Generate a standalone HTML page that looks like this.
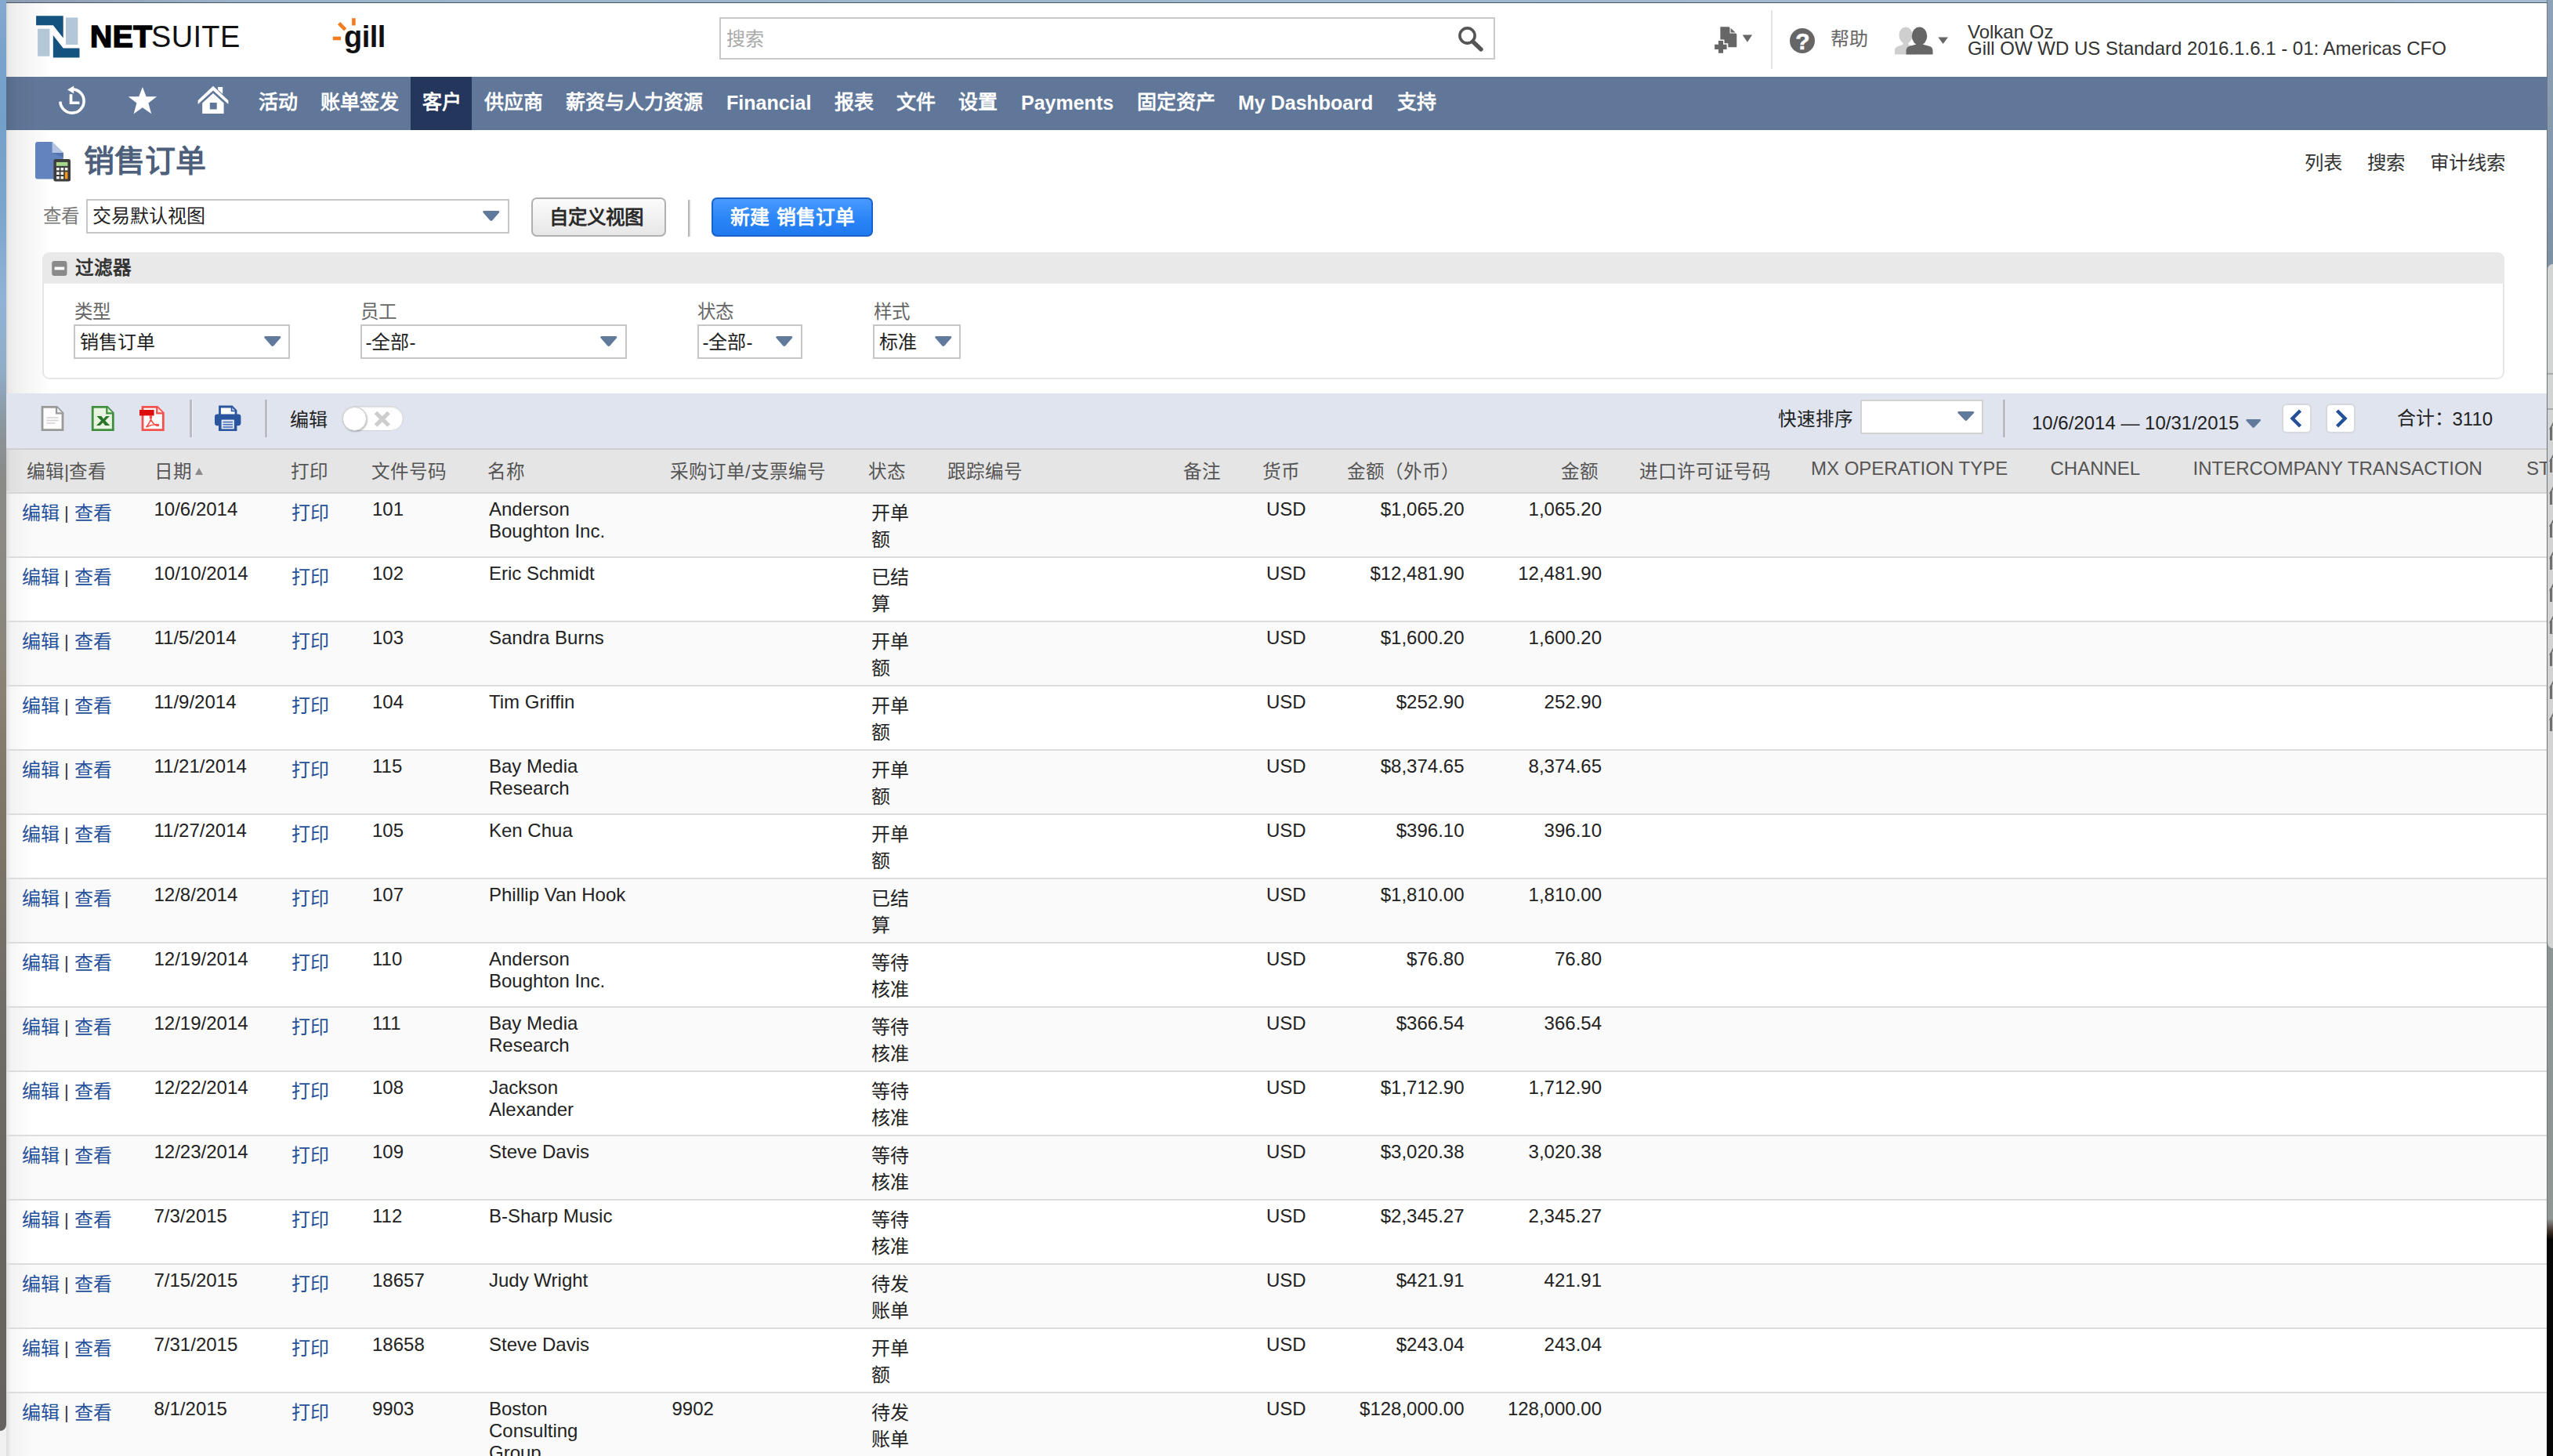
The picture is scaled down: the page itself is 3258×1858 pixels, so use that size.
<!DOCTYPE html>
<html lang="zh-CN"><head><meta charset="utf-8"><title>销售订单 - NetSuite</title>
<style>
html,body{margin:0;padding:0}
body{width:3258px;height:1858px;overflow:hidden;position:relative;background:#fff;font-family:"Liberation Sans",sans-serif;}
.t{position:absolute;white-space:nowrap;font-family:"Liberation Sans",sans-serif;}
.a{position:absolute}
.sel{position:absolute;box-sizing:border-box;background:#fff;border:2px solid #c6c6c6}
.car{position:absolute;width:0;height:0;border-left:11px solid transparent;border-right:11px solid transparent;border-top:12px solid #5f7799;border-radius:3px}
svg{position:absolute;overflow:visible}
</style></head><body>

<div class="a" style="left:0;top:0;width:8px;height:1858px;background:#f1f1f1"></div>
<div class="a" style="left:0;top:0;width:8px;height:1826px;border-radius:0 0 8px 0;background:linear-gradient(#84a9d0 0px,#7aa3cc 60px,#73a0c9 150px,#7ba5cc 270px,#8fb3d6 380px,#90adc8 470px,#8c979f 540px,#8a8b8a 600px,#8a8578 850px,#807868 1000px,#6f6c66 1300px,#68645f 1600px,#66625f 1826px)"></div>
<div class="a" style="left:8px;top:0;width:3250px;height:3px;background:linear-gradient(90deg,#8f9db3,#9bb3c8 300px,#9fb8cc 1600px,#a6bad2 3250px)"></div>
<div class="a" style="left:8px;top:3px;width:3242px;height:1px;background:#4a5764"></div>
<div class="a" style="left:8px;top:4px;width:60px;height:94px;background:linear-gradient(90deg,#dad7d5 0,#e9e9e9 3px,#f0f0f0 12px,#f7f7f7 32px,#fff 60px)"></div>
<div class="a" style="left:8px;top:166px;width:60px;height:336px;background:linear-gradient(90deg,#dad7d5 0,#e9e9e9 3px,#f0f0f0 12px,#f7f7f7 32px,#fff 60px)"></div>
<div class="a" style="left:3250px;top:0;width:8px;height:1858px;background:linear-gradient(#8ea3b8 0,#7e91a3 336px,#8a9594 1212px,#8f9794 1555px,#3a2a22 1572px,#060606 1582px,#050505 1858px)"></div>
<div class="a" style="left:3251px;top:337px;width:8px;height:873px;border-radius:7px 0 0 7px;background:#d3d3d3"></div>
<div class="a" style="left:3251px;top:476px;width:8px;height:1.5px;background:#a9a9a9"></div><div class="a" style="left:3251px;top:521px;width:8px;height:1.5px;background:#a9a9a9"></div>
<div class="a" style="left:3254.4px;top:545.0px;width:2.4px;height:17px;background:#6e6e6e"></div><div class="a" style="left:3255.5px;top:537.0px;width:2.4px;height:11px;background:#6e6e6e;transform:skewX(-28deg)"></div>
<div class="a" style="left:3254.4px;top:586.2px;width:2.4px;height:17px;background:#6e6e6e"></div><div class="a" style="left:3255.5px;top:578.2px;width:2.4px;height:11px;background:#6e6e6e;transform:skewX(-28deg)"></div>
<div class="a" style="left:3254.4px;top:627.4px;width:2.4px;height:17px;background:#6e6e6e"></div><div class="a" style="left:3255.5px;top:619.4px;width:2.4px;height:11px;background:#6e6e6e;transform:skewX(-28deg)"></div>
<div class="a" style="left:3254.4px;top:668.6px;width:2.4px;height:17px;background:#6e6e6e"></div><div class="a" style="left:3255.5px;top:660.6px;width:2.4px;height:11px;background:#6e6e6e;transform:skewX(-28deg)"></div>
<div class="a" style="left:3254.4px;top:709.8px;width:2.4px;height:17px;background:#6e6e6e"></div><div class="a" style="left:3255.5px;top:701.8px;width:2.4px;height:11px;background:#6e6e6e;transform:skewX(-28deg)"></div>
<div class="a" style="left:3254.4px;top:751.0px;width:2.4px;height:17px;background:#6e6e6e"></div><div class="a" style="left:3255.5px;top:743.0px;width:2.4px;height:11px;background:#6e6e6e;transform:skewX(-28deg)"></div>
<div class="a" style="left:3254.4px;top:792.2px;width:2.4px;height:17px;background:#6e6e6e"></div><div class="a" style="left:3255.5px;top:784.2px;width:2.4px;height:11px;background:#6e6e6e;transform:skewX(-28deg)"></div>
<div class="a" style="left:3254.4px;top:833.4px;width:2.4px;height:17px;background:#6e6e6e"></div><div class="a" style="left:3255.5px;top:825.4px;width:2.4px;height:11px;background:#6e6e6e;transform:skewX(-28deg)"></div>
<div class="a" style="left:3254.4px;top:874.6px;width:2.4px;height:17px;background:#6e6e6e"></div><div class="a" style="left:3255.5px;top:866.6px;width:2.4px;height:11px;background:#6e6e6e;transform:skewX(-28deg)"></div>
<div class="a" style="left:3254.4px;top:915.8px;width:2.4px;height:17px;background:#6e6e6e"></div><div class="a" style="left:3255.5px;top:907.8px;width:2.4px;height:11px;background:#6e6e6e;transform:skewX(-28deg)"></div>
<div class="a" style="left:3250px;top:0;width:1.3px;height:1575px;background:rgba(85,85,85,.5)"></div>
<svg style="left:0;top:0" width="320" height="98" viewBox="0 0 320 98">
<rect x="48.1" y="36.7" width="15.3" height="35.1" fill="#b3c7d8"/>
<rect x="84" y="22.4" width="15.4" height="34.6" fill="#b3c7d8"/>
<polygon points="46.1,20.2 80.7,20.2 80.7,48.5 67.8,32.3 46.1,32.3" fill="#14527f"/>
<polygon points="67.8,44.9 80.7,61.5 101.5,61.5 101.5,73.4 67.8,73.4" fill="#14527f"/>
</svg>
<div class="t" style="left:115px;top:27.3px;font-size:39px;line-height:39px;color:#000;font-weight:bold;-webkit-text-stroke:1.6px #000;letter-spacing:0.5px">NET</div>
<div class="t" style="left:192.6px;top:27.3px;font-size:39px;line-height:39px;color:#111;font-weight:normal;letter-spacing:0.4px;transform:scaleX(.972);transform-origin:0 0">SUITE</div>
<svg style="left:0;top:0" width="520" height="98" viewBox="0 0 520 98">
<g stroke="#f47b20" stroke-width="4.6" fill="none">
<line x1="424.8" y1="49" x2="435" y2="49"/>
<line x1="432.6" y1="29.6" x2="440.6" y2="37.8"/>
<line x1="451.4" y1="23.2" x2="451.4" y2="32.4"/>
</g></svg>
<div class="t" style="left:439px;top:27.6px;font-size:38px;line-height:38px;color:#111;font-weight:bold;letter-spacing:-0.5px">gill</div>
<div class="a" style="left:918px;top:22px;width:990px;height:54px;box-sizing:border-box;border:2px solid #c9c9c9;background:#fff"></div>
<div class="t" style="left:927px;top:38.3px;font-size:24px;line-height:24px;color:#a9a9a9;font-weight:normal;">搜索</div>
<svg style="left:1856px;top:30px" width="44" height="40" viewBox="0 0 44 40">
<circle cx="16.5" cy="15.5" r="9.6" fill="none" stroke="#555" stroke-width="3.6"/>
<line x1="23.5" y1="23" x2="34" y2="33" stroke="#555" stroke-width="5.4" stroke-linecap="round"/>
</svg>
<svg style="left:2180px;top:28px" width="70" height="46" viewBox="2180 28 70 46">
<path d="M2195.4 34.2 H2206.5 L2216.3 43.6 V60.2 H2195.4 Z" fill="#666"/>
<path d="M2207.5 33.2 L2217.3 42.6 H2207.5 Z" fill="#fff"/>
<path d="M2208.6 35.8 L2214.6 41.6 H2208.6 Z" fill="#666"/>
<path d="M2191.5 50.5 h9 v4.8 h4.8 v9.2 h-4.8 v4.8 h-9 v-4.8 h-4.8 v-9.2 h4.8 z" fill="#fff"/>
<path d="M2193 52 h6.1 v4.8 h4.5 v6.2 h-4.5 v4.8 h-6.1 v-4.8 h-4.9 v-6.2 h4.9 z" fill="#666"/>
<path d="M2223.7 44.5 h12.4 l-6.2 9.2 z" fill="#666"/>
</svg>
<div class="a" style="left:2259.6px;top:13px;width:2.2px;height:75px;background:#e4e4e4"></div>
<div class="a" style="left:2284px;top:36px;width:32px;height:32px;border-radius:16px;background:#666"></div>
<div class="t" style="left:2291.2px;top:37.8px;font-size:30px;line-height:30px;color:#fff;font-weight:bold;-webkit-text-stroke:0.6px #fff">?</div>
<div class="t" style="left:2335.8px;top:38.1px;font-size:24px;line-height:24px;color:#666;font-weight:normal;">帮助</div>
<svg style="left:2410px;top:28px" width="90" height="46" viewBox="2410 28 90 46">
<g fill="#cfcfcf"><ellipse cx="2432" cy="45" rx="8.6" ry="10.5"/><path d="M2418 69.6 v-5.5 q0-4 4.5-5.2 l6-1.8 v-4 h7 v4 l6 1.8 q4.5 1.2 4.5 5.2 v5.5 z"/></g>
<g fill="#666"><ellipse cx="2449.5" cy="46" rx="9.8" ry="11.6"/><path d="M2432.5 69.6 v-5 q0-4.6 5-5.8 l7.5-2 v-4.5 h9 v4.5 l7.5 2 q5 1.2 5 5.8 v5 z"/></g>
<path d="M2473.3 47.6 h12.7 l-6.35 8.5 z" fill="#666"/>
</svg>
<div class="t" style="left:2511px;top:28.9px;font-size:24px;line-height:24px;color:#333;font-weight:normal;">Volkan Oz</div>
<div class="t" style="left:2511px;top:50.1px;font-size:24px;line-height:24px;color:#333;font-weight:normal;">Gill OW WD US Standard 2016.1.6.1 - 01: Americas CFO</div>
<div class="a" style="left:8px;top:98px;width:3242px;height:68px;background:#607799"></div>
<div class="a" style="left:8px;top:98px;width:40px;height:68px;background:linear-gradient(90deg,#566a89,#5d7394 14px,#607799 40px)"></div>
<div class="a" style="left:524px;top:98px;width:78px;height:68px;background:#24365c"></div>
<svg style="left:60px;top:98px" width="250" height="68" viewBox="60 98 250 68">
<path d="M 92.6 113.9 A 15.1 15.1 0 1 1 76.9 129.6" fill="none" stroke="#fff" stroke-width="3.6"/>
<path d="M86.1 114.4 L94.2 109.4 V119.4 Z" fill="#fff"/>
<path d="M88.7 120.2 h3.7 v9.4 h9 v3.4 h-12.7 z" fill="#fff"/>
<polygon fill="#fff" points="181.9,111.1 186.6,123.2 200.1,123.2 189.4,131.6 193.2,145.2 181.9,137.2 170.6,145.2 174.4,131.6 163.7,123.2 177.2,123.2"/>
<path d="M252.6 128.2 L272 109.8 L291.4 128.2 L291.4 133 L272 115.4 L252.6 133 Z" fill="#fff"/>
<path d="M278.1 111.1 h6.1 v9 l-6.1 -5.6 z" fill="#fff"/>
<path d="M258.2 131.6 L272 119 L285.6 131.6 V145.1 H258.2 Z M267.8 131 V139.5 H276.7 V131 Z" fill="#fff" fill-rule="evenodd"/>
</svg>
<div class="t" style="left:330px;top:117.8px;font-size:25px;line-height:25px;color:#fff;font-weight:bold;">活动</div>
<div class="t" style="left:409px;top:117.8px;font-size:25px;line-height:25px;color:#fff;font-weight:bold;">账单签发</div>
<div class="t" style="left:538.5px;top:117.8px;font-size:25px;line-height:25px;color:#fff;font-weight:bold;">客户</div>
<div class="t" style="left:618px;top:117.8px;font-size:25px;line-height:25px;color:#fff;font-weight:bold;">供应商</div>
<div class="t" style="left:722px;top:117.8px;font-size:25px;line-height:25px;color:#fff;font-weight:bold;">薪资与人力资源</div>
<div class="t" style="left:927px;top:118.5px;font-size:25px;line-height:25px;color:#fff;font-weight:bold;">Financial</div>
<div class="t" style="left:1065px;top:117.8px;font-size:25px;line-height:25px;color:#fff;font-weight:bold;">报表</div>
<div class="t" style="left:1144px;top:117.8px;font-size:25px;line-height:25px;color:#fff;font-weight:bold;">文件</div>
<div class="t" style="left:1223px;top:117.8px;font-size:25px;line-height:25px;color:#fff;font-weight:bold;">设置</div>
<div class="t" style="left:1303px;top:118.5px;font-size:25px;line-height:25px;color:#fff;font-weight:bold;">Payments</div>
<div class="t" style="left:1451px;top:117.8px;font-size:25px;line-height:25px;color:#fff;font-weight:bold;">固定资产</div>
<div class="t" style="left:1580px;top:118.5px;font-size:25px;line-height:25px;color:#fff;font-weight:bold;">My Dashboard</div>
<div class="t" style="left:1782.5px;top:117.8px;font-size:25px;line-height:25px;color:#fff;font-weight:bold;">支持</div>
<svg style="left:40px;top:176px" width="60" height="62" viewBox="40 176 60 62">
<path d="M48 181 H66.6 L80.8 195 V225.6 a3 3 0 0 1 -3 3 H48 a3 3 0 0 1 -3 -3 V184 a3 3 0 0 1 3 -3 Z" fill="#6283bd"/>
<path d="M66.6 181 L80.8 195 H66.6 Z" fill="#b3c3e2"/>
<path d="M66.6 195 H80.8 V201 Z" fill="#5273ab"/>
<rect x="68.4" y="203.1" width="21.6" height="28.5" rx="2.4" fill="#3d3d3d"/>
<rect x="71.8" y="206.9" width="14.6" height="4.9" fill="#a8d88a"/>
<g fill="#fff"><rect x="72.1" y="214" width="3.6" height="3.4"/><rect x="77.5" y="214" width="3.6" height="3.4"/><rect x="82.8" y="214" width="3.6" height="3.4"/>
<rect x="72.1" y="219.4" width="3.6" height="3.6"/><rect x="77.5" y="219.4" width="3.6" height="3.6"/>
<rect x="72.1" y="225" width="3.6" height="3.4"/><rect x="77.5" y="225" width="3.6" height="3.4"/></g>
<rect x="82.8" y="219.4" width="3.6" height="9" fill="#f59a1f"/>
</svg>
<div class="t" style="left:107.3px;top:185.8px;font-size:39px;line-height:39px;color:#4d5f7b;font-weight:bold;">销售订单</div>
<div class="t" style="left:2941px;top:195.5px;font-size:24.4px;line-height:24.4px;color:#333;font-weight:normal;">列表</div>
<div class="t" style="left:3020.5px;top:195.5px;font-size:24.4px;line-height:24.4px;color:#333;font-weight:normal;">搜索</div>
<div class="t" style="left:3101px;top:195.5px;font-size:24.4px;line-height:24.4px;color:#333;font-weight:normal;">审计线索</div>
<div class="t" style="left:54.5px;top:264.7px;font-size:23.5px;line-height:23.5px;color:#777;font-weight:normal;">查看</div>
<div class="sel" style="left:110px;top:254px;width:540px;height:44px"></div>
<div class="t" style="left:118px;top:264.3px;font-size:24px;line-height:24px;color:#222;font-weight:normal;">交易默认视图</div>
<svg style="left:616.1px;top:268.7px" width="21.6" height="13.2" viewBox="0 0 21.6 13.2" preserveAspectRatio="none"><path d="M2 0 H19.6 Q22.6 0.3 20.6 2.8 L12.3 12.2 Q10.8 13.8 9.3 12.2 L1 2.8 Q-1 0.3 2 0 Z" fill="#617a9c"/></svg>
<div class="a" style="left:678px;top:252px;width:172px;height:50px;box-sizing:border-box;border:2px solid #b0b0b0;border-radius:7px;background:linear-gradient(#fbfbfb,#e7e7e7)"></div>
<div class="t" style="left:701.2px;top:265.9px;font-size:24.5px;line-height:24.5px;color:#2b2b2b;font-weight:bold;">自定义视图</div>
<div class="a" style="left:878px;top:254.5px;width:2.4px;height:47px;background:#b4b8b8;box-shadow:1.4px 0 0 #e4e6e6"></div>
<div class="a" style="left:907.5px;top:252px;width:206px;height:50px;box-sizing:border-box;border:2px solid #1a62c6;border-radius:7px;background:linear-gradient(#4a9aff,#2a85f7 55%,#2079ef)"></div>
<div class="t" style="left:932px;top:266.2px;font-size:24.8px;line-height:24.8px;color:#fff;font-weight:bold;word-spacing:2px">新建 销售订单</div>
<div class="a" style="left:54px;top:322px;width:3142px;height:162px;box-sizing:border-box;border:2px solid #e6e6e6;border-radius:9px;background:#fff"></div>
<div class="a" style="left:54px;top:322px;width:3142px;height:40px;border-radius:9px 9px 0 0;background:#e9e9e9"></div>
<svg style="left:64px;top:330px" width="24" height="24" viewBox="64 330 24 24">
<rect x="66.2" y="333" width="19.3" height="19" rx="3.2" fill="#8a8a8a"/><rect x="69.6" y="340.6" width="12.6" height="3.8" fill="#fff"/></svg>
<div class="t" style="left:95.5px;top:331.3px;font-size:23.6px;line-height:23.6px;color:#333;font-weight:bold;">过滤器</div>
<div class="t" style="left:94.5px;top:386.7px;font-size:23.5px;line-height:23.5px;color:#666;font-weight:normal;">类型</div>
<div class="sel" style="left:94px;top:414px;width:276px;height:43.5px"></div>
<div class="t" style="left:101.5px;top:424.7px;font-size:24px;line-height:24px;color:#222;font-weight:normal;">销售订单</div>
<svg style="left:336.8px;top:428.6px" width="21.6" height="13.2" viewBox="0 0 21.6 13.2" preserveAspectRatio="none"><path d="M2 0 H19.6 Q22.6 0.3 20.6 2.8 L12.3 12.2 Q10.8 13.8 9.3 12.2 L1 2.8 Q-1 0.3 2 0 Z" fill="#617a9c"/></svg>
<div class="t" style="left:460.0px;top:386.7px;font-size:23.5px;line-height:23.5px;color:#666;font-weight:normal;">员工</div>
<div class="sel" style="left:459.5px;top:414px;width:340px;height:43.5px"></div>
<div class="t" style="left:466.5px;top:424.7px;font-size:24px;line-height:24px;color:#222;font-weight:normal;">-全部-</div>
<svg style="left:766.3px;top:428.6px" width="21.6" height="13.2" viewBox="0 0 21.6 13.2" preserveAspectRatio="none"><path d="M2 0 H19.6 Q22.6 0.3 20.6 2.8 L12.3 12.2 Q10.8 13.8 9.3 12.2 L1 2.8 Q-1 0.3 2 0 Z" fill="#617a9c"/></svg>
<div class="t" style="left:890.0px;top:386.7px;font-size:23.5px;line-height:23.5px;color:#666;font-weight:normal;">状态</div>
<div class="sel" style="left:889.5px;top:414px;width:134px;height:43.5px"></div>
<div class="t" style="left:896.5px;top:424.7px;font-size:24px;line-height:24px;color:#222;font-weight:normal;">-全部-</div>
<svg style="left:990.3px;top:428.6px" width="21.6" height="13.2" viewBox="0 0 21.6 13.2" preserveAspectRatio="none"><path d="M2 0 H19.6 Q22.6 0.3 20.6 2.8 L12.3 12.2 Q10.8 13.8 9.3 12.2 L1 2.8 Q-1 0.3 2 0 Z" fill="#617a9c"/></svg>
<div class="t" style="left:1114.5px;top:386.7px;font-size:23.5px;line-height:23.5px;color:#666;font-weight:normal;">样式</div>
<div class="sel" style="left:1114px;top:414px;width:112px;height:43.5px"></div>
<div class="t" style="left:1121.5px;top:424.7px;font-size:24px;line-height:24px;color:#222;font-weight:normal;">标准</div>
<svg style="left:1192.8px;top:428.6px" width="21.6" height="13.2" viewBox="0 0 21.6 13.2" preserveAspectRatio="none"><path d="M2 0 H19.6 Q22.6 0.3 20.6 2.8 L12.3 12.2 Q10.8 13.8 9.3 12.2 L1 2.8 Q-1 0.3 2 0 Z" fill="#617a9c"/></svg>
<div class="a" style="left:8px;top:502px;width:3242px;height:71px;background:#dfe4ef"></div>
<svg style="left:40px;top:510px" width="480" height="56" viewBox="40 510 480 56">
<!-- doc -->
<path d="M54 519.4 H72.5 L80 527 V548.6 H54 Z" fill="#fcfcfc" stroke="#999" stroke-width="2.8"/>
<path d="M72 519.4 V527.4 H80" fill="#f0f0f0" stroke="#999" stroke-width="2.2"/>
<g stroke="#d4d4d4" stroke-width="1.6"><line x1="59.5" y1="533" x2="74.5" y2="533"/><line x1="59.5" y1="536.5" x2="74.5" y2="536.5"/><line x1="59.5" y1="540" x2="70.5" y2="540"/></g>
<!-- excel -->
<path d="M118.2 519.4 H136.8 L144.3 527 V548.6 H118.2 Z" fill="#e9f4e1" stroke="#3f8f3f" stroke-width="2.8"/>
<path d="M136.3 519.4 V527.4 H144.3" fill="#d9ecd0" stroke="#3f8f3f" stroke-width="2.2"/>
<path d="M123.4 531 h6 l2.6 3.6 l3.4 -3.6 h4.6 l-5.8 5.8 l6 6.2 h-6 l-2.9 -3.8 l-3.6 3.8 h-4.7 l6.1 -6.2 z" fill="#2a752a"/>
<!-- pdf -->
<path d="M182 519.4 H200.6 L208.3 527 V548.6 H182 Z" fill="#fff" stroke="#f4504e" stroke-width="2.8"/>
<path d="M200.2 519.4 V527.4 H208.3" fill="#fde1e0" stroke="#f4504e" stroke-width="2.2"/>
<rect x="178" y="523" width="18.6" height="7.4" fill="#dd0b0b"/>
<path d="M186.5 545 q4 -4 6.5 -11.5 q1 -3 -0.6 -3 q-1.6 0 -0.4 3.6 q2 6 7 8.6 q3 1.4 3.4 0 q0.2 -1.4 -3 -1.2 q-6 0.4 -12.9 3.5 z" fill="none" stroke="#f4504e" stroke-width="1.7"/>
<!-- printer -->
<path d="M280.5 519 H296 L301 524 V531 H280.5 Z" fill="#fff" stroke="#2a569f" stroke-width="2.8"/>
<path d="M295.5 519.5 V524.5 H300.5" fill="#c9d6ee" stroke="#2a569f" stroke-width="1.6"/>
<rect x="274" y="528.6" width="33.4" height="14.6" rx="3.4" fill="#2a569f"/>
<rect x="279" y="533.4" width="23.4" height="16.6" fill="#2a569f"/>
<rect x="282.6" y="535.6" width="16.2" height="11.8" fill="#e6ecf8"/>
<g stroke="#4d74b6" stroke-width="1.7"><line x1="284.4" y1="538.6" x2="297" y2="538.6"/><line x1="284.4" y1="541.8" x2="297" y2="541.8"/><line x1="284.4" y1="545" x2="297" y2="545"/></g>
</svg>
<div class="a" style="left:242px;top:510px;width:2.6px;height:48px;background:#b9bcc2"></div>
<div class="a" style="left:244.6px;top:510px;width:1.6px;height:48px;background:#eef1f6"></div>
<div class="a" style="left:338px;top:510px;width:2.6px;height:48px;background:#b9bcc2"></div>
<div class="a" style="left:340.6px;top:510px;width:1.6px;height:48px;background:#eef1f6"></div>
<div class="t" style="left:370.3px;top:524.3px;font-size:24px;line-height:24px;color:#222;font-weight:normal;">编辑</div>
<div class="a" style="left:436px;top:518px;width:79px;height:32px;box-sizing:border-box;border:1.5px solid #d2d4d8;border-radius:16px;background:#fff;box-shadow:inset 0 1px 2px rgba(0,0,0,.12)"></div>
<div class="a" style="left:436.5px;top:518.5px;width:31px;height:31px;box-sizing:border-box;border:1.5px solid #cfcfcf;border-radius:16px;background:#fff;box-shadow:1px 1px 2px rgba(0,0,0,.25)"></div>
<svg style="left:476px;top:523px" width="24" height="24" viewBox="0 0 24 24"><path d="M3.5 3.5 L20 20 M20 3.5 L3.5 20" stroke="#cdcdcd" stroke-width="5.2"/></svg>
<div class="t" style="left:2269px;top:523.6px;font-size:23.6px;line-height:23.6px;color:#222;font-weight:normal;">快速排序</div>
<div class="sel" style="left:2374px;top:510px;width:157px;height:44px;border-color:#d2d2d2"></div>
<svg style="left:2498.2px;top:525.2px" width="21.6" height="12.2" viewBox="0 0 21.6 13.2" preserveAspectRatio="none"><path d="M2 0 H19.6 Q22.6 0.3 20.6 2.8 L12.3 12.2 Q10.8 13.8 9.3 12.2 L1 2.8 Q-1 0.3 2 0 Z" fill="#617a9c"/></svg>
<div class="a" style="left:2556px;top:510px;width:2.6px;height:48px;background:#b9bcc2"></div><div class="a" style="left:2558.6px;top:510px;width:1.6px;height:48px;background:#eef1f6"></div>
<div class="t" style="left:2593px;top:527.7px;font-size:24px;line-height:24px;color:#222;font-weight:normal;">10/6/2014 — 10/31/2015</div>
<svg style="left:2866.4px;top:534.5px" width="19.4" height="11" viewBox="0 0 21.6 13.2" preserveAspectRatio="none"><path d="M2 0 H19.6 Q22.6 0.3 20.6 2.8 L12.3 12.2 Q10.8 13.8 9.3 12.2 L1 2.8 Q-1 0.3 2 0 Z" fill="#617a9c"/></svg>
<div class="a" style="left:2912px;top:515px;width:38px;height:38px;box-sizing:border-box;border:2px solid #d6d8dd;border-radius:6px;background:#fff"></div>
<svg style="left:2912px;top:515px" width="38" height="38" viewBox="0 0 38 38"><path d="M23.5 9 L13.5 19 L23.5 29" fill="none" stroke="#24509a" stroke-width="4.4"/></svg>
<div class="a" style="left:2968px;top:515px;width:38px;height:38px;box-sizing:border-box;border:2px solid #d6d8dd;border-radius:6px;background:#fff"></div>
<svg style="left:2968px;top:515px" width="38" height="38" viewBox="0 0 38 38"><path d="M14.5 9 L24.5 19 L14.5 29" fill="none" stroke="#24509a" stroke-width="4.4"/></svg>
<div class="t" style="left:3059px;top:522.3px;font-size:24px;line-height:24px;color:#222;font-weight:normal;">合计：</div>
<div class="t" style="left:3129.5px;top:523.1px;font-size:24px;line-height:24px;color:#222;font-weight:normal;">3110</div>
<div class="a" style="left:8px;top:572px;width:3242px;height:58px;box-sizing:border-box;background:#e5e5e5;border-top:2px solid #cfcfcf;border-bottom:2px solid #d6d6d6"></div>
<div class="a" style="left:8px;top:574px;width:24px;height:53px;background:linear-gradient(90deg,#cfcfcf,#dedede 5px,#e5e5e5 24px)"></div>
<div class="t" style="left:34px;top:590.5px;font-size:23.6px;line-height:23.6px;color:#555;font-weight:normal;">编辑|查看</div>
<div class="t" style="left:196.5px;top:590.5px;font-size:23.6px;line-height:23.6px;color:#555;font-weight:normal;">日期</div>
<div class="a" style="left:249px;top:597px;width:0;height:0;border-left:5px solid transparent;border-right:5px solid transparent;border-bottom:9px solid #8a8a8a"></div>
<div class="t" style="left:371px;top:590.5px;font-size:23.6px;line-height:23.6px;color:#555;font-weight:normal;">打印</div>
<div class="t" style="left:473.5px;top:590.5px;font-size:23.6px;line-height:23.6px;color:#555;font-weight:normal;">文件号码</div>
<div class="t" style="left:621.5px;top:590.5px;font-size:23.6px;line-height:23.6px;color:#555;font-weight:normal;">名称</div>
<div class="t" style="left:855px;top:590.5px;font-size:23.6px;line-height:23.6px;color:#555;font-weight:normal;">采购订单/支票编号</div>
<div class="t" style="left:1108px;top:590.5px;font-size:23.6px;line-height:23.6px;color:#555;font-weight:normal;">状态</div>
<div class="t" style="left:1209px;top:590.5px;font-size:23.6px;line-height:23.6px;color:#555;font-weight:normal;">跟踪编号</div>
<div class="t" style="left:1509.5px;top:590.5px;font-size:23.6px;line-height:23.6px;color:#555;font-weight:normal;">备注</div>
<div class="t" style="left:1611px;top:590.5px;font-size:23.6px;line-height:23.6px;color:#555;font-weight:normal;">货币</div>
<div class="t" style="left:1718.5px;top:590.5px;font-size:23.6px;line-height:23.6px;color:#555;font-weight:normal;">金额（外币）</div>
<div class="t" style="left:2091.5px;top:590.5px;font-size:23.6px;line-height:23.6px;color:#555;font-weight:normal;">进口许可证号码</div>
<div class="t" style="right:1218.5px;top:590.5px;font-size:23.6px;line-height:23.6px;color:#555;font-weight:normal;">金额</div>
<div class="t" style="left:2311px;top:586.3px;font-size:24px;line-height:24px;color:#555;font-weight:normal;">MX OPERATION TYPE</div>
<div class="t" style="left:2616.5px;top:586.3px;font-size:24px;line-height:24px;color:#555;font-weight:normal;">CHANNEL</div>
<div class="t" style="left:2798.5px;top:586.3px;font-size:24px;line-height:24px;color:#555;font-weight:normal;">INTERCOMPANY TRANSACTION</div>
<div class="t" style="left:3224px;top:586.3px;font-size:24px;line-height:24px;color:#555;font-weight:normal;width:26px;overflow:hidden">ST</div>
<div class="a" style="left:8px;top:630px;width:3242px;height:80px;background:#fafafa"></div>
<div class="a" style="left:8px;top:630px;width:34px;height:80px;background:linear-gradient(90deg,rgba(120,120,120,.22),rgba(150,150,150,.08) 6px,rgba(200,200,200,0) 34px)"></div>
<div class="a" style="left:8px;top:710px;width:3242px;height:2px;background:#dcdcdc"></div>
<div class="t" style="left:27.5px;top:643.0px;font-size:24px;line-height:24px;color:#25509a;font-weight:normal;"><span style="color:#25509a">编辑</span><span style="font-size:22px;color:#333;padding:0 7px 0 6.5px;position:relative;top:-1.5px">|</span><span style="color:#25509a">查看</span></div>
<div class="t" style="left:196.5px;top:637.9px;font-size:24px;line-height:24px;color:#222;font-weight:normal;">10/6/2014</div>
<div class="t" style="left:371.6px;top:643.0px;font-size:24px;line-height:24px;color:#25509a;font-weight:normal;">打印</div>
<div class="t" style="left:475px;top:637.9px;font-size:24px;line-height:24px;color:#222;font-weight:normal;">101</div>
<div class="t" style="left:624px;top:637.9px;font-size:24px;line-height:24px;color:#222;font-weight:normal;">Anderson</div>
<div class="t" style="left:624px;top:665.9px;font-size:24px;line-height:24px;color:#222;font-weight:normal;">Boughton Inc.</div>
<div class="t" style="left:1112.3px;top:643.0px;font-size:24px;line-height:24px;color:#222;font-weight:normal;">开单</div>
<div class="t" style="left:1112.3px;top:677.3px;font-size:24px;line-height:24px;color:#222;font-weight:normal;">额</div>
<div class="t" style="left:1616px;top:637.9px;font-size:24px;line-height:24px;color:#222;font-weight:normal;">USD</div>
<div class="t" style="right:1389.5px;top:637.9px;font-size:24px;line-height:24px;color:#222;font-weight:normal;">$1,065.20</div>
<div class="t" style="right:1214px;top:637.9px;font-size:24px;line-height:24px;color:#222;font-weight:normal;">1,065.20</div>
<div class="a" style="left:8px;top:712px;width:3242px;height:80px;background:#ffffff"></div>
<div class="a" style="left:8px;top:712px;width:34px;height:80px;background:linear-gradient(90deg,rgba(120,120,120,.22),rgba(150,150,150,.08) 6px,rgba(200,200,200,0) 34px)"></div>
<div class="a" style="left:8px;top:792px;width:3242px;height:2px;background:#dcdcdc"></div>
<div class="t" style="left:27.5px;top:725.0px;font-size:24px;line-height:24px;color:#25509a;font-weight:normal;"><span style="color:#25509a">编辑</span><span style="font-size:22px;color:#333;padding:0 7px 0 6.5px;position:relative;top:-1.5px">|</span><span style="color:#25509a">查看</span></div>
<div class="t" style="left:196.5px;top:719.9px;font-size:24px;line-height:24px;color:#222;font-weight:normal;">10/10/2014</div>
<div class="t" style="left:371.6px;top:725.0px;font-size:24px;line-height:24px;color:#25509a;font-weight:normal;">打印</div>
<div class="t" style="left:475px;top:719.9px;font-size:24px;line-height:24px;color:#222;font-weight:normal;">102</div>
<div class="t" style="left:624px;top:719.9px;font-size:24px;line-height:24px;color:#222;font-weight:normal;">Eric Schmidt</div>
<div class="t" style="left:1112.3px;top:725.0px;font-size:24px;line-height:24px;color:#222;font-weight:normal;">已结</div>
<div class="t" style="left:1112.3px;top:759.3px;font-size:24px;line-height:24px;color:#222;font-weight:normal;">算</div>
<div class="t" style="left:1616px;top:719.9px;font-size:24px;line-height:24px;color:#222;font-weight:normal;">USD</div>
<div class="t" style="right:1389.5px;top:719.9px;font-size:24px;line-height:24px;color:#222;font-weight:normal;">$12,481.90</div>
<div class="t" style="right:1214px;top:719.9px;font-size:24px;line-height:24px;color:#222;font-weight:normal;">12,481.90</div>
<div class="a" style="left:8px;top:794px;width:3242px;height:80px;background:#fafafa"></div>
<div class="a" style="left:8px;top:794px;width:34px;height:80px;background:linear-gradient(90deg,rgba(120,120,120,.22),rgba(150,150,150,.08) 6px,rgba(200,200,200,0) 34px)"></div>
<div class="a" style="left:8px;top:874px;width:3242px;height:2px;background:#dcdcdc"></div>
<div class="t" style="left:27.5px;top:807.0px;font-size:24px;line-height:24px;color:#25509a;font-weight:normal;"><span style="color:#25509a">编辑</span><span style="font-size:22px;color:#333;padding:0 7px 0 6.5px;position:relative;top:-1.5px">|</span><span style="color:#25509a">查看</span></div>
<div class="t" style="left:196.5px;top:801.9px;font-size:24px;line-height:24px;color:#222;font-weight:normal;">11/5/2014</div>
<div class="t" style="left:371.6px;top:807.0px;font-size:24px;line-height:24px;color:#25509a;font-weight:normal;">打印</div>
<div class="t" style="left:475px;top:801.9px;font-size:24px;line-height:24px;color:#222;font-weight:normal;">103</div>
<div class="t" style="left:624px;top:801.9px;font-size:24px;line-height:24px;color:#222;font-weight:normal;">Sandra Burns</div>
<div class="t" style="left:1112.3px;top:807.0px;font-size:24px;line-height:24px;color:#222;font-weight:normal;">开单</div>
<div class="t" style="left:1112.3px;top:841.3px;font-size:24px;line-height:24px;color:#222;font-weight:normal;">额</div>
<div class="t" style="left:1616px;top:801.9px;font-size:24px;line-height:24px;color:#222;font-weight:normal;">USD</div>
<div class="t" style="right:1389.5px;top:801.9px;font-size:24px;line-height:24px;color:#222;font-weight:normal;">$1,600.20</div>
<div class="t" style="right:1214px;top:801.9px;font-size:24px;line-height:24px;color:#222;font-weight:normal;">1,600.20</div>
<div class="a" style="left:8px;top:876px;width:3242px;height:80px;background:#ffffff"></div>
<div class="a" style="left:8px;top:876px;width:34px;height:80px;background:linear-gradient(90deg,rgba(120,120,120,.22),rgba(150,150,150,.08) 6px,rgba(200,200,200,0) 34px)"></div>
<div class="a" style="left:8px;top:956px;width:3242px;height:2px;background:#dcdcdc"></div>
<div class="t" style="left:27.5px;top:889.0px;font-size:24px;line-height:24px;color:#25509a;font-weight:normal;"><span style="color:#25509a">编辑</span><span style="font-size:22px;color:#333;padding:0 7px 0 6.5px;position:relative;top:-1.5px">|</span><span style="color:#25509a">查看</span></div>
<div class="t" style="left:196.5px;top:883.9px;font-size:24px;line-height:24px;color:#222;font-weight:normal;">11/9/2014</div>
<div class="t" style="left:371.6px;top:889.0px;font-size:24px;line-height:24px;color:#25509a;font-weight:normal;">打印</div>
<div class="t" style="left:475px;top:883.9px;font-size:24px;line-height:24px;color:#222;font-weight:normal;">104</div>
<div class="t" style="left:624px;top:883.9px;font-size:24px;line-height:24px;color:#222;font-weight:normal;">Tim Griffin</div>
<div class="t" style="left:1112.3px;top:889.0px;font-size:24px;line-height:24px;color:#222;font-weight:normal;">开单</div>
<div class="t" style="left:1112.3px;top:923.3px;font-size:24px;line-height:24px;color:#222;font-weight:normal;">额</div>
<div class="t" style="left:1616px;top:883.9px;font-size:24px;line-height:24px;color:#222;font-weight:normal;">USD</div>
<div class="t" style="right:1389.5px;top:883.9px;font-size:24px;line-height:24px;color:#222;font-weight:normal;">$252.90</div>
<div class="t" style="right:1214px;top:883.9px;font-size:24px;line-height:24px;color:#222;font-weight:normal;">252.90</div>
<div class="a" style="left:8px;top:958px;width:3242px;height:80px;background:#fafafa"></div>
<div class="a" style="left:8px;top:958px;width:34px;height:80px;background:linear-gradient(90deg,rgba(120,120,120,.22),rgba(150,150,150,.08) 6px,rgba(200,200,200,0) 34px)"></div>
<div class="a" style="left:8px;top:1038px;width:3242px;height:2px;background:#dcdcdc"></div>
<div class="t" style="left:27.5px;top:971.0px;font-size:24px;line-height:24px;color:#25509a;font-weight:normal;"><span style="color:#25509a">编辑</span><span style="font-size:22px;color:#333;padding:0 7px 0 6.5px;position:relative;top:-1.5px">|</span><span style="color:#25509a">查看</span></div>
<div class="t" style="left:196.5px;top:965.9px;font-size:24px;line-height:24px;color:#222;font-weight:normal;">11/21/2014</div>
<div class="t" style="left:371.6px;top:971.0px;font-size:24px;line-height:24px;color:#25509a;font-weight:normal;">打印</div>
<div class="t" style="left:475px;top:965.9px;font-size:24px;line-height:24px;color:#222;font-weight:normal;">115</div>
<div class="t" style="left:624px;top:965.9px;font-size:24px;line-height:24px;color:#222;font-weight:normal;">Bay Media</div>
<div class="t" style="left:624px;top:993.9px;font-size:24px;line-height:24px;color:#222;font-weight:normal;">Research</div>
<div class="t" style="left:1112.3px;top:971.0px;font-size:24px;line-height:24px;color:#222;font-weight:normal;">开单</div>
<div class="t" style="left:1112.3px;top:1005.3px;font-size:24px;line-height:24px;color:#222;font-weight:normal;">额</div>
<div class="t" style="left:1616px;top:965.9px;font-size:24px;line-height:24px;color:#222;font-weight:normal;">USD</div>
<div class="t" style="right:1389.5px;top:965.9px;font-size:24px;line-height:24px;color:#222;font-weight:normal;">$8,374.65</div>
<div class="t" style="right:1214px;top:965.9px;font-size:24px;line-height:24px;color:#222;font-weight:normal;">8,374.65</div>
<div class="a" style="left:8px;top:1040px;width:3242px;height:80px;background:#ffffff"></div>
<div class="a" style="left:8px;top:1040px;width:34px;height:80px;background:linear-gradient(90deg,rgba(120,120,120,.22),rgba(150,150,150,.08) 6px,rgba(200,200,200,0) 34px)"></div>
<div class="a" style="left:8px;top:1120px;width:3242px;height:2px;background:#dcdcdc"></div>
<div class="t" style="left:27.5px;top:1053.0px;font-size:24px;line-height:24px;color:#25509a;font-weight:normal;"><span style="color:#25509a">编辑</span><span style="font-size:22px;color:#333;padding:0 7px 0 6.5px;position:relative;top:-1.5px">|</span><span style="color:#25509a">查看</span></div>
<div class="t" style="left:196.5px;top:1047.9px;font-size:24px;line-height:24px;color:#222;font-weight:normal;">11/27/2014</div>
<div class="t" style="left:371.6px;top:1053.0px;font-size:24px;line-height:24px;color:#25509a;font-weight:normal;">打印</div>
<div class="t" style="left:475px;top:1047.9px;font-size:24px;line-height:24px;color:#222;font-weight:normal;">105</div>
<div class="t" style="left:624px;top:1047.9px;font-size:24px;line-height:24px;color:#222;font-weight:normal;">Ken Chua</div>
<div class="t" style="left:1112.3px;top:1053.0px;font-size:24px;line-height:24px;color:#222;font-weight:normal;">开单</div>
<div class="t" style="left:1112.3px;top:1087.3px;font-size:24px;line-height:24px;color:#222;font-weight:normal;">额</div>
<div class="t" style="left:1616px;top:1047.9px;font-size:24px;line-height:24px;color:#222;font-weight:normal;">USD</div>
<div class="t" style="right:1389.5px;top:1047.9px;font-size:24px;line-height:24px;color:#222;font-weight:normal;">$396.10</div>
<div class="t" style="right:1214px;top:1047.9px;font-size:24px;line-height:24px;color:#222;font-weight:normal;">396.10</div>
<div class="a" style="left:8px;top:1122px;width:3242px;height:80px;background:#fafafa"></div>
<div class="a" style="left:8px;top:1122px;width:34px;height:80px;background:linear-gradient(90deg,rgba(120,120,120,.22),rgba(150,150,150,.08) 6px,rgba(200,200,200,0) 34px)"></div>
<div class="a" style="left:8px;top:1202px;width:3242px;height:2px;background:#dcdcdc"></div>
<div class="t" style="left:27.5px;top:1135.0px;font-size:24px;line-height:24px;color:#25509a;font-weight:normal;"><span style="color:#25509a">编辑</span><span style="font-size:22px;color:#333;padding:0 7px 0 6.5px;position:relative;top:-1.5px">|</span><span style="color:#25509a">查看</span></div>
<div class="t" style="left:196.5px;top:1129.9px;font-size:24px;line-height:24px;color:#222;font-weight:normal;">12/8/2014</div>
<div class="t" style="left:371.6px;top:1135.0px;font-size:24px;line-height:24px;color:#25509a;font-weight:normal;">打印</div>
<div class="t" style="left:475px;top:1129.9px;font-size:24px;line-height:24px;color:#222;font-weight:normal;">107</div>
<div class="t" style="left:624px;top:1129.9px;font-size:24px;line-height:24px;color:#222;font-weight:normal;">Phillip Van Hook</div>
<div class="t" style="left:1112.3px;top:1135.0px;font-size:24px;line-height:24px;color:#222;font-weight:normal;">已结</div>
<div class="t" style="left:1112.3px;top:1169.3px;font-size:24px;line-height:24px;color:#222;font-weight:normal;">算</div>
<div class="t" style="left:1616px;top:1129.9px;font-size:24px;line-height:24px;color:#222;font-weight:normal;">USD</div>
<div class="t" style="right:1389.5px;top:1129.9px;font-size:24px;line-height:24px;color:#222;font-weight:normal;">$1,810.00</div>
<div class="t" style="right:1214px;top:1129.9px;font-size:24px;line-height:24px;color:#222;font-weight:normal;">1,810.00</div>
<div class="a" style="left:8px;top:1204px;width:3242px;height:80px;background:#ffffff"></div>
<div class="a" style="left:8px;top:1204px;width:34px;height:80px;background:linear-gradient(90deg,rgba(120,120,120,.22),rgba(150,150,150,.08) 6px,rgba(200,200,200,0) 34px)"></div>
<div class="a" style="left:8px;top:1284px;width:3242px;height:2px;background:#dcdcdc"></div>
<div class="t" style="left:27.5px;top:1217.0px;font-size:24px;line-height:24px;color:#25509a;font-weight:normal;"><span style="color:#25509a">编辑</span><span style="font-size:22px;color:#333;padding:0 7px 0 6.5px;position:relative;top:-1.5px">|</span><span style="color:#25509a">查看</span></div>
<div class="t" style="left:196.5px;top:1211.9px;font-size:24px;line-height:24px;color:#222;font-weight:normal;">12/19/2014</div>
<div class="t" style="left:371.6px;top:1217.0px;font-size:24px;line-height:24px;color:#25509a;font-weight:normal;">打印</div>
<div class="t" style="left:475px;top:1211.9px;font-size:24px;line-height:24px;color:#222;font-weight:normal;">110</div>
<div class="t" style="left:624px;top:1211.9px;font-size:24px;line-height:24px;color:#222;font-weight:normal;">Anderson</div>
<div class="t" style="left:624px;top:1239.9px;font-size:24px;line-height:24px;color:#222;font-weight:normal;">Boughton Inc.</div>
<div class="t" style="left:1112.3px;top:1217.0px;font-size:24px;line-height:24px;color:#222;font-weight:normal;">等待</div>
<div class="t" style="left:1112.3px;top:1251.3px;font-size:24px;line-height:24px;color:#222;font-weight:normal;">核准</div>
<div class="t" style="left:1616px;top:1211.9px;font-size:24px;line-height:24px;color:#222;font-weight:normal;">USD</div>
<div class="t" style="right:1389.5px;top:1211.9px;font-size:24px;line-height:24px;color:#222;font-weight:normal;">$76.80</div>
<div class="t" style="right:1214px;top:1211.9px;font-size:24px;line-height:24px;color:#222;font-weight:normal;">76.80</div>
<div class="a" style="left:8px;top:1286px;width:3242px;height:80px;background:#fafafa"></div>
<div class="a" style="left:8px;top:1286px;width:34px;height:80px;background:linear-gradient(90deg,rgba(120,120,120,.22),rgba(150,150,150,.08) 6px,rgba(200,200,200,0) 34px)"></div>
<div class="a" style="left:8px;top:1366px;width:3242px;height:2px;background:#dcdcdc"></div>
<div class="t" style="left:27.5px;top:1299.0px;font-size:24px;line-height:24px;color:#25509a;font-weight:normal;"><span style="color:#25509a">编辑</span><span style="font-size:22px;color:#333;padding:0 7px 0 6.5px;position:relative;top:-1.5px">|</span><span style="color:#25509a">查看</span></div>
<div class="t" style="left:196.5px;top:1293.9px;font-size:24px;line-height:24px;color:#222;font-weight:normal;">12/19/2014</div>
<div class="t" style="left:371.6px;top:1299.0px;font-size:24px;line-height:24px;color:#25509a;font-weight:normal;">打印</div>
<div class="t" style="left:475px;top:1293.9px;font-size:24px;line-height:24px;color:#222;font-weight:normal;">111</div>
<div class="t" style="left:624px;top:1293.9px;font-size:24px;line-height:24px;color:#222;font-weight:normal;">Bay Media</div>
<div class="t" style="left:624px;top:1321.9px;font-size:24px;line-height:24px;color:#222;font-weight:normal;">Research</div>
<div class="t" style="left:1112.3px;top:1299.0px;font-size:24px;line-height:24px;color:#222;font-weight:normal;">等待</div>
<div class="t" style="left:1112.3px;top:1333.3px;font-size:24px;line-height:24px;color:#222;font-weight:normal;">核准</div>
<div class="t" style="left:1616px;top:1293.9px;font-size:24px;line-height:24px;color:#222;font-weight:normal;">USD</div>
<div class="t" style="right:1389.5px;top:1293.9px;font-size:24px;line-height:24px;color:#222;font-weight:normal;">$366.54</div>
<div class="t" style="right:1214px;top:1293.9px;font-size:24px;line-height:24px;color:#222;font-weight:normal;">366.54</div>
<div class="a" style="left:8px;top:1368px;width:3242px;height:80px;background:#ffffff"></div>
<div class="a" style="left:8px;top:1368px;width:34px;height:80px;background:linear-gradient(90deg,rgba(120,120,120,.22),rgba(150,150,150,.08) 6px,rgba(200,200,200,0) 34px)"></div>
<div class="a" style="left:8px;top:1448px;width:3242px;height:2px;background:#dcdcdc"></div>
<div class="t" style="left:27.5px;top:1381.0px;font-size:24px;line-height:24px;color:#25509a;font-weight:normal;"><span style="color:#25509a">编辑</span><span style="font-size:22px;color:#333;padding:0 7px 0 6.5px;position:relative;top:-1.5px">|</span><span style="color:#25509a">查看</span></div>
<div class="t" style="left:196.5px;top:1375.9px;font-size:24px;line-height:24px;color:#222;font-weight:normal;">12/22/2014</div>
<div class="t" style="left:371.6px;top:1381.0px;font-size:24px;line-height:24px;color:#25509a;font-weight:normal;">打印</div>
<div class="t" style="left:475px;top:1375.9px;font-size:24px;line-height:24px;color:#222;font-weight:normal;">108</div>
<div class="t" style="left:624px;top:1375.9px;font-size:24px;line-height:24px;color:#222;font-weight:normal;">Jackson</div>
<div class="t" style="left:624px;top:1403.9px;font-size:24px;line-height:24px;color:#222;font-weight:normal;">Alexander</div>
<div class="t" style="left:1112.3px;top:1381.0px;font-size:24px;line-height:24px;color:#222;font-weight:normal;">等待</div>
<div class="t" style="left:1112.3px;top:1415.3px;font-size:24px;line-height:24px;color:#222;font-weight:normal;">核准</div>
<div class="t" style="left:1616px;top:1375.9px;font-size:24px;line-height:24px;color:#222;font-weight:normal;">USD</div>
<div class="t" style="right:1389.5px;top:1375.9px;font-size:24px;line-height:24px;color:#222;font-weight:normal;">$1,712.90</div>
<div class="t" style="right:1214px;top:1375.9px;font-size:24px;line-height:24px;color:#222;font-weight:normal;">1,712.90</div>
<div class="a" style="left:8px;top:1450px;width:3242px;height:80px;background:#fafafa"></div>
<div class="a" style="left:8px;top:1450px;width:34px;height:80px;background:linear-gradient(90deg,rgba(120,120,120,.22),rgba(150,150,150,.08) 6px,rgba(200,200,200,0) 34px)"></div>
<div class="a" style="left:8px;top:1530px;width:3242px;height:2px;background:#dcdcdc"></div>
<div class="t" style="left:27.5px;top:1463.0px;font-size:24px;line-height:24px;color:#25509a;font-weight:normal;"><span style="color:#25509a">编辑</span><span style="font-size:22px;color:#333;padding:0 7px 0 6.5px;position:relative;top:-1.5px">|</span><span style="color:#25509a">查看</span></div>
<div class="t" style="left:196.5px;top:1457.9px;font-size:24px;line-height:24px;color:#222;font-weight:normal;">12/23/2014</div>
<div class="t" style="left:371.6px;top:1463.0px;font-size:24px;line-height:24px;color:#25509a;font-weight:normal;">打印</div>
<div class="t" style="left:475px;top:1457.9px;font-size:24px;line-height:24px;color:#222;font-weight:normal;">109</div>
<div class="t" style="left:624px;top:1457.9px;font-size:24px;line-height:24px;color:#222;font-weight:normal;">Steve Davis</div>
<div class="t" style="left:1112.3px;top:1463.0px;font-size:24px;line-height:24px;color:#222;font-weight:normal;">等待</div>
<div class="t" style="left:1112.3px;top:1497.3px;font-size:24px;line-height:24px;color:#222;font-weight:normal;">核准</div>
<div class="t" style="left:1616px;top:1457.9px;font-size:24px;line-height:24px;color:#222;font-weight:normal;">USD</div>
<div class="t" style="right:1389.5px;top:1457.9px;font-size:24px;line-height:24px;color:#222;font-weight:normal;">$3,020.38</div>
<div class="t" style="right:1214px;top:1457.9px;font-size:24px;line-height:24px;color:#222;font-weight:normal;">3,020.38</div>
<div class="a" style="left:8px;top:1532px;width:3242px;height:80px;background:#ffffff"></div>
<div class="a" style="left:8px;top:1532px;width:34px;height:80px;background:linear-gradient(90deg,rgba(120,120,120,.22),rgba(150,150,150,.08) 6px,rgba(200,200,200,0) 34px)"></div>
<div class="a" style="left:8px;top:1612px;width:3242px;height:2px;background:#dcdcdc"></div>
<div class="t" style="left:27.5px;top:1545.0px;font-size:24px;line-height:24px;color:#25509a;font-weight:normal;"><span style="color:#25509a">编辑</span><span style="font-size:22px;color:#333;padding:0 7px 0 6.5px;position:relative;top:-1.5px">|</span><span style="color:#25509a">查看</span></div>
<div class="t" style="left:196.5px;top:1539.9px;font-size:24px;line-height:24px;color:#222;font-weight:normal;">7/3/2015</div>
<div class="t" style="left:371.6px;top:1545.0px;font-size:24px;line-height:24px;color:#25509a;font-weight:normal;">打印</div>
<div class="t" style="left:475px;top:1539.9px;font-size:24px;line-height:24px;color:#222;font-weight:normal;">112</div>
<div class="t" style="left:624px;top:1539.9px;font-size:24px;line-height:24px;color:#222;font-weight:normal;">B-Sharp Music</div>
<div class="t" style="left:1112.3px;top:1545.0px;font-size:24px;line-height:24px;color:#222;font-weight:normal;">等待</div>
<div class="t" style="left:1112.3px;top:1579.3px;font-size:24px;line-height:24px;color:#222;font-weight:normal;">核准</div>
<div class="t" style="left:1616px;top:1539.9px;font-size:24px;line-height:24px;color:#222;font-weight:normal;">USD</div>
<div class="t" style="right:1389.5px;top:1539.9px;font-size:24px;line-height:24px;color:#222;font-weight:normal;">$2,345.27</div>
<div class="t" style="right:1214px;top:1539.9px;font-size:24px;line-height:24px;color:#222;font-weight:normal;">2,345.27</div>
<div class="a" style="left:8px;top:1614px;width:3242px;height:80px;background:#fafafa"></div>
<div class="a" style="left:8px;top:1614px;width:34px;height:80px;background:linear-gradient(90deg,rgba(120,120,120,.22),rgba(150,150,150,.08) 6px,rgba(200,200,200,0) 34px)"></div>
<div class="a" style="left:8px;top:1694px;width:3242px;height:2px;background:#dcdcdc"></div>
<div class="t" style="left:27.5px;top:1627.0px;font-size:24px;line-height:24px;color:#25509a;font-weight:normal;"><span style="color:#25509a">编辑</span><span style="font-size:22px;color:#333;padding:0 7px 0 6.5px;position:relative;top:-1.5px">|</span><span style="color:#25509a">查看</span></div>
<div class="t" style="left:196.5px;top:1621.9px;font-size:24px;line-height:24px;color:#222;font-weight:normal;">7/15/2015</div>
<div class="t" style="left:371.6px;top:1627.0px;font-size:24px;line-height:24px;color:#25509a;font-weight:normal;">打印</div>
<div class="t" style="left:475px;top:1621.9px;font-size:24px;line-height:24px;color:#222;font-weight:normal;">18657</div>
<div class="t" style="left:624px;top:1621.9px;font-size:24px;line-height:24px;color:#222;font-weight:normal;">Judy Wright</div>
<div class="t" style="left:1112.3px;top:1627.0px;font-size:24px;line-height:24px;color:#222;font-weight:normal;">待发</div>
<div class="t" style="left:1112.3px;top:1661.3px;font-size:24px;line-height:24px;color:#222;font-weight:normal;">账单</div>
<div class="t" style="left:1616px;top:1621.9px;font-size:24px;line-height:24px;color:#222;font-weight:normal;">USD</div>
<div class="t" style="right:1389.5px;top:1621.9px;font-size:24px;line-height:24px;color:#222;font-weight:normal;">$421.91</div>
<div class="t" style="right:1214px;top:1621.9px;font-size:24px;line-height:24px;color:#222;font-weight:normal;">421.91</div>
<div class="a" style="left:8px;top:1696px;width:3242px;height:80px;background:#ffffff"></div>
<div class="a" style="left:8px;top:1696px;width:34px;height:80px;background:linear-gradient(90deg,rgba(120,120,120,.22),rgba(150,150,150,.08) 6px,rgba(200,200,200,0) 34px)"></div>
<div class="a" style="left:8px;top:1776px;width:3242px;height:2px;background:#dcdcdc"></div>
<div class="t" style="left:27.5px;top:1709.0px;font-size:24px;line-height:24px;color:#25509a;font-weight:normal;"><span style="color:#25509a">编辑</span><span style="font-size:22px;color:#333;padding:0 7px 0 6.5px;position:relative;top:-1.5px">|</span><span style="color:#25509a">查看</span></div>
<div class="t" style="left:196.5px;top:1703.9px;font-size:24px;line-height:24px;color:#222;font-weight:normal;">7/31/2015</div>
<div class="t" style="left:371.6px;top:1709.0px;font-size:24px;line-height:24px;color:#25509a;font-weight:normal;">打印</div>
<div class="t" style="left:475px;top:1703.9px;font-size:24px;line-height:24px;color:#222;font-weight:normal;">18658</div>
<div class="t" style="left:624px;top:1703.9px;font-size:24px;line-height:24px;color:#222;font-weight:normal;">Steve Davis</div>
<div class="t" style="left:1112.3px;top:1709.0px;font-size:24px;line-height:24px;color:#222;font-weight:normal;">开单</div>
<div class="t" style="left:1112.3px;top:1743.3px;font-size:24px;line-height:24px;color:#222;font-weight:normal;">额</div>
<div class="t" style="left:1616px;top:1703.9px;font-size:24px;line-height:24px;color:#222;font-weight:normal;">USD</div>
<div class="t" style="right:1389.5px;top:1703.9px;font-size:24px;line-height:24px;color:#222;font-weight:normal;">$243.04</div>
<div class="t" style="right:1214px;top:1703.9px;font-size:24px;line-height:24px;color:#222;font-weight:normal;">243.04</div>
<div class="a" style="left:8px;top:1778px;width:3242px;height:80px;background:#fafafa"></div>
<div class="a" style="left:8px;top:1778px;width:34px;height:80px;background:linear-gradient(90deg,rgba(120,120,120,.22),rgba(150,150,150,.08) 6px,rgba(200,200,200,0) 34px)"></div>
<div class="a" style="left:8px;top:1858px;width:3242px;height:2px;background:#dcdcdc"></div>
<div class="t" style="left:27.5px;top:1791.0px;font-size:24px;line-height:24px;color:#25509a;font-weight:normal;"><span style="color:#25509a">编辑</span><span style="font-size:22px;color:#333;padding:0 7px 0 6.5px;position:relative;top:-1.5px">|</span><span style="color:#25509a">查看</span></div>
<div class="t" style="left:196.5px;top:1785.9px;font-size:24px;line-height:24px;color:#222;font-weight:normal;">8/1/2015</div>
<div class="t" style="left:371.6px;top:1791.0px;font-size:24px;line-height:24px;color:#25509a;font-weight:normal;">打印</div>
<div class="t" style="left:475px;top:1785.9px;font-size:24px;line-height:24px;color:#222;font-weight:normal;">9903</div>
<div class="t" style="left:624px;top:1785.9px;font-size:24px;line-height:24px;color:#222;font-weight:normal;">Boston</div>
<div class="t" style="left:624px;top:1813.9px;font-size:24px;line-height:24px;color:#222;font-weight:normal;">Consulting</div>
<div class="t" style="left:624px;top:1841.9px;font-size:24px;line-height:24px;color:#222;font-weight:normal;">Group</div>
<div class="t" style="left:857.5px;top:1785.9px;font-size:24px;line-height:24px;color:#222;font-weight:normal;">9902</div>
<div class="t" style="left:1112.3px;top:1791.0px;font-size:24px;line-height:24px;color:#222;font-weight:normal;">待发</div>
<div class="t" style="left:1112.3px;top:1825.3px;font-size:24px;line-height:24px;color:#222;font-weight:normal;">账单</div>
<div class="t" style="left:1616px;top:1785.9px;font-size:24px;line-height:24px;color:#222;font-weight:normal;">USD</div>
<div class="t" style="right:1389.5px;top:1785.9px;font-size:24px;line-height:24px;color:#222;font-weight:normal;">$128,000.00</div>
<div class="t" style="right:1214px;top:1785.9px;font-size:24px;line-height:24px;color:#222;font-weight:normal;">128,000.00</div>
</body></html>
